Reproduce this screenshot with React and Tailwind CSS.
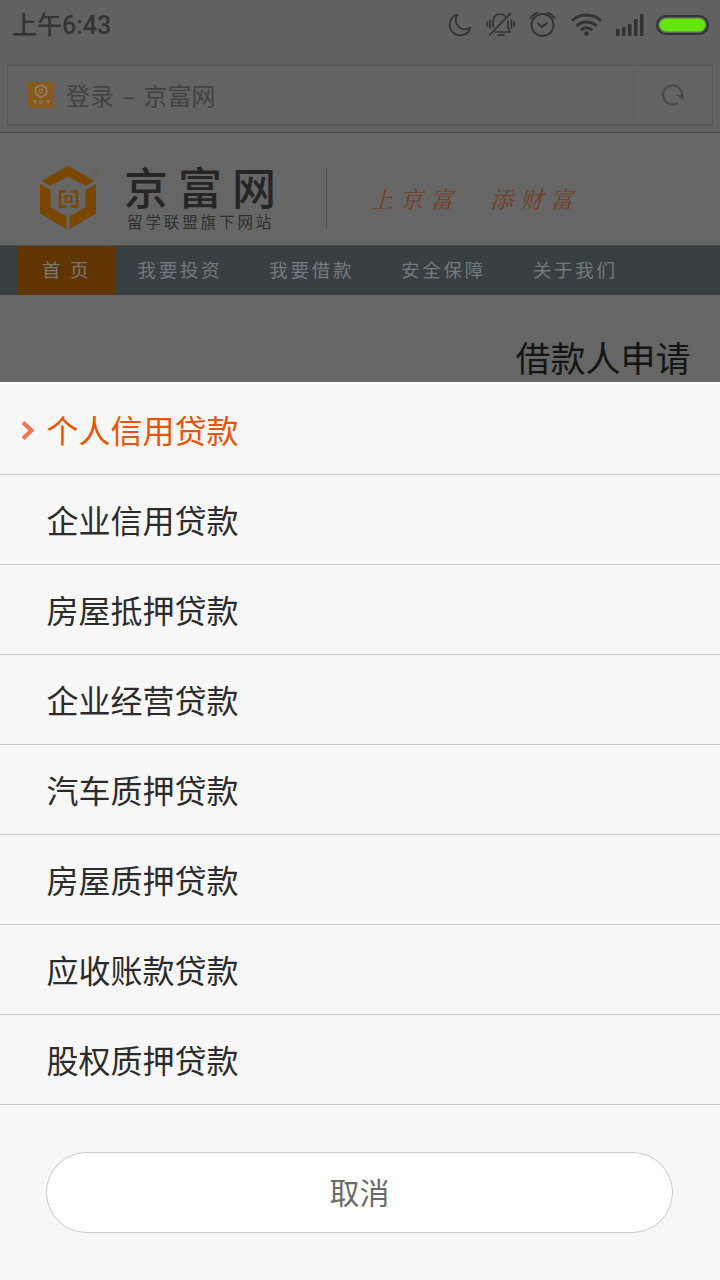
import React, { useState } from 'react';

const loanTypes = [
  '个人信用贷款',
  '企业信用贷款',
  '房屋抵押贷款',
  '企业经营贷款',
  '汽车质押贷款',
  '房屋质押贷款',
  '应收账款贷款',
  '股权质押贷款',
];

const navLinks = ['我要投资', '我要借款', '安全保障', '关于我们'];

const StatusIcons = () => (
  <svg width="264" height="32" viewBox="446 9 264 32" fill="none" stroke="#333333" strokeWidth="2" strokeLinecap="round" strokeLinejoin="round">
    {/* Moon */}
    <path d="M457.500 14.500A10.600 10.600 0 1 0 470.500 27.500A9.300 9.300 0 0 1 457.500 14.500Z" strokeWidth="1.800" />
    {/* Muted bell */}
    <g strokeWidth="1.700">
      <path d="M493 27V21.500C493 17 496 14 500 14C502.500 14 504.500 15 506 17" />
      <path d="M508 21V27.500L510 32H495" />
      <path d="M510.500 13.500L489.500 35M498 35.200H504" />
      <path d="M490 20V28M487.300 22V26M511.500 20V28M514.300 22V26" />
    </g>
    {/* Alarm clock */}
    <circle cx="542.500" cy="25" r="11" strokeWidth="1.800" />
    <path d="M538 23.500L542 27L547 23M530.500 18A15 15 0 0 1 537 12.800M548 12.800A15 15 0 0 1 554.500 18" />
    {/* Wifi */}
    <g strokeWidth="2.900" strokeLinecap="butt">
      <path d="M572 20.800A21 21 0 0 1 601 20.800" />
      <path d="M576.500 26A14.500 14.500 0 0 1 596.500 26" />
      <path d="M580.800 30.200A8 8 0 0 1 592.200 30.200" />
    </g>
    <circle cx="586.500" cy="33.500" r="2.400" fill="#333333" stroke="none" />
    {/* Signal strength */}
    <path d="M616 29h3.500v7H616zM622 27h3.500v9H622zM628 24h3.500v12H628zM634 19h3.500v17H634zM640 14h3.500v22H640z" fill="#333333" stroke="none" />
    {/* Battery */}
    <rect x="657" y="16" width="51" height="18" rx="9" />
    <rect x="659.500" y="18.500" width="46" height="13" rx="6.500" fill="#64e60d" stroke="none" />
  </svg>
);

const Logo = () => (
  <svg width="62" height="66" viewBox="38 164 62 66" fill="#7a4700">
    <path d="M68 166L94 180.500L86 186L68 176.500L50 186L42 180.500Z" />
    <path d="M40 184L50.500 190V207L66.500 216.500V229L40 213.500Z" />
    <path d="M96 184L85.500 190V207L69.500 216.500V229L96 213.500Z" />
    {/* Coin in the middle */}
    <path d="M66.500 191.500H60V206.500H66.500M70.500 191.500H77V206.500H70.500" fill="none" stroke="#7a4700" strokeWidth="2.500" />
    <rect x="65.500" y="196" width="6" height="6" fill="none" stroke="#7a4700" strokeWidth="2" />
    <circle cx="95.500" cy="172" r="2" fill="none" stroke="#75551f" strokeWidth="0.700" />
  </svg>
);

const BrowserBar = () => (
  <div className="h-[133px] border-b border-[#484848] bg-[#616161]">
    <div className="flex h-[65px] items-start justify-between pt-[9px] pr-[10px] pl-3">
      <span className="-mt-[2px] text-[25px] leading-[32px] font-medium text-[#343434]">
        上午<span className="font-['Roboto','Noto_Sans_CJK_SC',sans-serif]">6:43</span>
      </span>
      <StatusIcons />
    </div>
    <div className="mx-[7px] flex h-[60px] border border-[#555555] bg-[#636363]">
      <div className="flex flex-1 items-center pl-5">
        <svg width="26" height="26" viewBox="0 0 26 26" fill="none" stroke="#918474">
          <rect width="26" height="26" rx="2" fill="#87591a" stroke="none" />
          <path d="M13 3L18.500 6V12L13 15.500L7.500 12V6Z" strokeWidth="1.500" />
          <circle cx="13" cy="9" r="2" />
          <path d="M5 19h4M7 18v4M11 19h4M11 21h4M18 19h4M20 18v4" />
        </svg>
        <span className="ml-3 text-[24px] leading-[36px] [word-spacing:3px] text-[#424242]">登录 – 京富网</span>
      </div>
      <div className="flex w-[79px] items-center justify-center border-l border-[#5c5c5c]">
        <svg width="24" height="24" viewBox="0 0 24 24" fill="none" stroke="#484848" strokeWidth="2">
          <path d="M16.500 20A9.500 9.500 0 1 1 21 13" />
          <path d="M15 12H22.500V17Z" fill="#484848" stroke="none" />
        </svg>
      </div>
    </div>
  </div>
);

const SiteHeader = () => (
  <header className="flex h-28 pl-[38px]">
    <div className="pt-[31px]">
      <Logo />
    </div>
    <div className="ml-6 w-[202px] pt-[28px]">
      <div className="h-[50px] text-[44px] leading-[50px] font-medium tracking-[10px] whitespace-nowrap text-[#262626]">京富网</div>
      <div className="pl-[3px] text-[15.500px] leading-[20px] tracking-[2.900px] whitespace-nowrap text-[#303030]">留学联盟旗下网站</div>
    </div>
    <div className="mt-[34px] h-[63px] w-px bg-[#505050]" />
    <div className="ml-[43px] flex gap-[30px] pt-[50px] font-['Noto_Serif_CJK_SC','Noto_Sans_CJK_SC',serif] text-[23px] leading-[32px] tracking-[7px] text-[#743d22] italic">
      <span>上京富</span>
      <span>添财富</span>
    </div>
  </header>
);

const SiteNav = () => (
  <nav className="flex h-[50px] border-t border-[#4f504c] bg-[#384043] pl-[18px] text-[18.500px] leading-[47px] text-[#747a7c]">
    <a className="w-[97px] bg-[#613500] pl-6 tracking-[2.700px]">首 页</a>
    <div className="flex pl-[22.500px]">
      {navLinks.map((link) => (
        <a key={link} className="w-[131.800px] tracking-[2.700px] whitespace-nowrap">{link}</a>
      ))}
    </div>
  </nav>
);

const LoanSheet = () => {
  const [selected, setSelected] = useState(loanTypes[0]);

  return (
    <section className="h-[898px] border-t-2 border-white bg-[#f7f7f7]">
      <ul>
        {loanTypes.map((type) => (
          <li
            key={type}
            onClick={() => setSelected(type)}
            className={`flex h-[90px] items-center border-b border-[#c8c8c8] pb-[2px] text-[32px] leading-[48px] first:h-[91px] first:pb-0 ${
              type === selected ? 'text-[#ea5505]' : 'text-[#2c2c2c]'
            }`}
          >
            <div className="flex w-[46.500px] pt-[3px] pl-5">
              {type === selected && (
                <svg width="16" height="22" viewBox="0 0 16 22" fill="none" stroke="#f4754e" strokeWidth="4">
                  <path d="M3 2.500L11.500 10.500L3 18.500" />
                </svg>
              )}
            </div>
            {type}
          </li>
        ))}
      </ul>
      <button className="mt-[47px] ml-[46px] flex h-[81px] w-[627px] items-center justify-center rounded-full border border-[#cacaca] bg-white pb-[4px] text-[30px] leading-[44px] text-[#6b6b6b]">
        取消
      </button>
    </section>
  );
};

const App = () => (
  <div className="h-[1280px] w-[720px] overflow-hidden bg-[#666666] font-['Noto_Sans_CJK_SC',sans-serif]">
    <BrowserBar />
    <SiteHeader />
    <SiteNav />
    <h1 className="h-[87px] pt-[36px] pr-[29.500px] text-right text-[35px] leading-[52px] text-[#151515]">借款人申请</h1>
    <LoanSheet />
  </div>
);

export default App;
